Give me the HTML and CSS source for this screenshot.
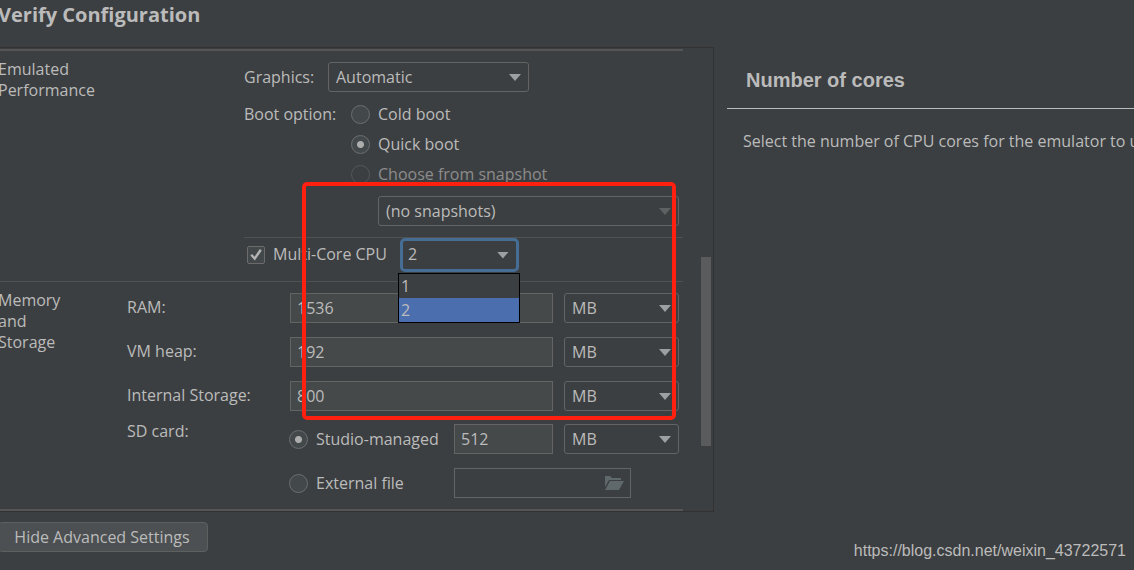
FILE: index.html
```
<!DOCTYPE html>
<html lang="en">
<head>
<meta charset="utf-8">
<title>Verify Configuration</title>
<link rel="stylesheet" href="styles.css">
</head>
<body>
<div class="page">
  <h1 class="title">Verify Configuration</h1>
  <main class="columns">
    <form class="panel">
      <div class="form">
        <section class="section performance">
          <h2 class="section-name">Emulated<br>Performance</h2>
          <div class="settings">
            <div class="row">
              <label class="graphics-label" for="graphics">Graphics:</label>
              <span class="select graphics-select"><select id="graphics"><option>Automatic</option></select></span>
            </div>
            <div class="boot">
              <span class="boot-label">Boot option:</span>
              <div class="boot-options" role="radiogroup" aria-label="Boot option">
                <label class="choice"><input type="radio" name="boot">Cold boot</label>
                <label class="choice"><input type="radio" name="boot" checked>Quick boot</label>
                <label class="choice disabled"><input type="radio" name="boot" disabled>Choose from snapshot</label>
              </div>
            </div>
            <div class="snapshots">
              <span class="select disabled"><select aria-label="Snapshot" disabled><option>(no snapshots)</option></select></span>
            </div>
            <div class="cpu">
              <label class="check"><input type="checkbox" checked><svg class="tick" viewBox="0 0 18 18" aria-hidden="true"><path d="M4.2 8.800 7.700 12.600 13.800 3.800"/></svg>Multi-Core CPU</label>
              <div class="cores">
                <span class="select focused"><select aria-label="Number of cores"><option>1</option><option selected>2</option></select></span>
                <ul class="popup" role="listbox" aria-label="Number of cores">
                  <li role="option" aria-selected="false">1</li>
                  <li role="option" aria-selected="true">2</li>
                </ul>
              </div>
            </div>
          </div>
        </section>
        <section class="section memory">
          <h2 class="section-name">Memory<br>and<br>Storage</h2>
          <div class="fields">
            <div class="field">
              <label for="ram">RAM:</label>
              <input class="text" id="ram" type="text" value="1536">
              <span class="select"><select aria-label="RAM unit"><option>MB</option></select></span>
            </div>
            <div class="field">
              <label for="heap">VM heap:</label>
              <input class="text" id="heap" type="text" value="192">
              <span class="select"><select aria-label="VM heap unit"><option>MB</option></select></span>
            </div>
            <div class="field">
              <label for="storage">Internal Storage:</label>
              <input class="text" id="storage" type="text" value="800">
              <span class="select"><select aria-label="Internal Storage unit"><option>MB</option></select></span>
            </div>
            <div class="field">
              <span class="sd-label">SD card:</span>
              <div class="managed">
                <label class="choice"><input type="radio" name="sd" checked>Studio-managed</label>
                <input class="text" type="text" value="512" aria-label="SD card size">
              </div>
              <span class="select"><select aria-label="SD card unit"><option>MB</option></select></span>
            </div>
            <div class="external">
              <label class="choice"><input type="radio" name="sd">External file</label>
              <span class="file">
                <input class="text empty" type="text" aria-label="External file path">
                <button class="browse" type="button" aria-label="Browse"><svg viewBox="0 0 20 16" aria-hidden="true"><path d="M1 1h5l2 2h9v2H5L1 12z"/><path d="M6 6h14l-5 9H1z"/></svg></button>
              </span>
            </div>
          </div>
        </section>
        <div class="highlight"></div>
      </div>
      <div class="scrollbar"><div class="thumb"></div></div>
    </form>
    <aside class="help">
      <h2 class="help-title">Number of cores</h2>
      <p class="help-text">Select the number of CPU cores for the emulator to u</p>
    </aside>
  </main>
  <footer class="footer">
    <button class="advanced" type="button">Hide Advanced Settings</button>
    <span class="watermark">https://blog.csdn.net/weixin_43722571</span>
  </footer>
</div>
</body>
</html>
```
FILE: styles.css
```
* { box-sizing: border-box; }

body {
  margin: 0;
  min-height: 100vh;
  background: #3c3f41;
  color: #bbbbbb;
  font: 16px/21px "Open Sans", "Noto Sans", sans-serif;
  overflow: hidden;
}

h1, h2, p, ul { margin: 0; padding: 0; font-weight: normal; }
select, input, button { font: inherit; color: inherit; margin: 0; }

.page { margin-left: -2px; }

.title {
  height: 47px;
  font-size: 20px;
  line-height: 29px;
  font-weight: bold;
}

.columns {
  display: grid;
  grid-template-columns: minmax(0, 716fr) minmax(0, 420fr);
}

.panel {
  display: flex;
  justify-content: space-between;
  border: solid #323232;
  border-width: 1px 1px 1px 0;
}

.form {
  position: relative;
  flex: 1;
  margin-top: 1px;
  border: solid #555555;
  border-width: 2px 0;
}

.section { display: flex; }
.section-name { font-size: 16px; line-height: 21px; }

.performance { padding-top: 8px; border-bottom: 1px solid #515151; }
.performance .section-name { width: 246px; }
.settings { flex: 1; padding-top: 3px; }

.row { display: flex; align-items: center; }
.graphics-label { width: 84px; }
.graphics-select { width: 201px; }

.select { position: relative; display: block; height: 30px; }
.select select {
  appearance: none;
  width: 100%;
  height: 100%;
  padding: 0 7px;
  border: 1px solid #646464;
  border-radius: 3px;
  background: #3c3f41;
  outline: none;
}
.select::after {
  content: "";
  position: absolute;
  right: 8px;
  top: 12px;
  width: 12px;
  height: 7px;
  background: #9da0a2;
  clip-path: polygon(0 0, 100% 0, 50% 100%);
}
.select.disabled::after { background: #5e6162; }
.select.disabled select { opacity: 1; }

.boot { display: flex; padding-top: 7px; }
.boot-label { width: 107px; line-height: 30px; }

.choice { display: flex; align-items: center; gap: 8px; height: 30px; white-space: nowrap; }
.choice.disabled { color: #8c8c8c; }
.choice input {
  appearance: none;
  width: 19px;
  height: 19px;
  border: 1px solid #6b6e6f;
  border-radius: 50%;
  background: #43494a;
}
.choice input:checked {
  background: radial-gradient(circle, #adadad 3px, #43494a 4px);
}
.choice input:disabled { border-color: #545658; background: #3c3f41; }

.snapshots { padding: 7px 4px 11px 134px; }

.cpu {
  display: flex;
  align-items: center;
  gap: 13px;
  height: 44px;
  padding: 0 0 10px 3px;
  border-top: 1px solid #515151;
}
.check { position: relative; display: flex; align-items: center; gap: 8px; white-space: nowrap; }
.check input {
  appearance: none;
  width: 18px;
  height: 18px;
  border: 1px solid #6b6b6b;
  border-radius: 2px;
  background: #43494a;
}
.tick {
  position: absolute;
  left: 0;
  width: 18px;
  height: 18px;
  fill: none;
  stroke: #b4b4b4;
  stroke-width: 2.4;
}

.cores { position: relative; width: 119px; }
.focused { height: 34px; }
.focused select { border: 3px solid #466d94; border-radius: 5px; padding: 0 5px; }
.focused::after { right: 10px; top: 14px; }

.popup {
  position: absolute;
  top: 35px;
  left: -2px;
  z-index: 1;
  width: 122px;
  border: 1px solid #000000;
  background: #3c3f41;
  list-style: none;
}
.popup li { height: 24px; padding: 0 2px; line-height: 25px; }
.popup li[aria-selected="true"] { background: #4b6eaf; }

.memory { padding: 8px 4px 11px 0; }
.memory .section-name { width: 129px; }
.fields { flex: 1; display: grid; gap: 14px; padding-top: 3px; }
.field { display: grid; grid-template-columns: 163px minmax(0, 1fr) 115px; }
.field:nth-child(4) { margin-top: -1px; }
.field > .text, .managed { margin-right: 11px; }
.field > label { line-height: 29px; }
.sd-label { line-height: 15px; }

.text {
  width: 100%;
  min-width: 0;
  height: 30px;
  padding: 0 6px;
  border: 1px solid #646464;
  background: #45494a;
  outline: none;
}
.field > .text { width: auto; }
.managed, .external { margin-left: -1px; }
.managed { display: grid; grid-template-columns: 165px minmax(0, 1fr); }
.empty { background: #3c3f41; }
.external { display: grid; grid-template-columns: 165px 177px; padding-left: 163px; }
.file { position: relative; }
.browse {
  position: absolute;
  right: 7px;
  top: 7px;
  width: 20px;
  height: 16px;
  padding: 0;
  border: 0;
  background: none;
}
.browse svg { display: block; width: 20px; height: 16px; fill: #5f686b; }

.highlight {
  position: absolute;
  top: 131px;
  left: 304px;
  right: 7px;
  height: 238px;
  border: 4px solid #ff2010;
  border-radius: 5px;
  z-index: 2;
  pointer-events: none;
}

.scrollbar { width: 30px; padding: 209px 2px 0 18px; }
.thumb { height: 189px; background: #5a5b5c; }

.help { margin-left: 13px; overflow: hidden; }
.help-title {
  padding: 22px 19px 16px;
  border-bottom: 1px solid #bbbbbb;
  font: bold 20px/23px "Liberation Sans", Arial, sans-serif;
}
.help-text { padding: 22px 0 22px 16px; white-space: nowrap; }

.footer {
  display: flex;
  justify-content: space-between;
  align-items: flex-start;
  padding: 10px 8px 0 0;
}
.advanced {
  width: 210px;
  height: 30px;
  padding: 0 2px 0 0;
  border: 1px solid #5e6060;
  border-radius: 4px;
  background: #4c5052;
}
.watermark {
  padding-top: 19px;
  font: 16px/20px "Liberation Sans", Arial, sans-serif;
}
```
